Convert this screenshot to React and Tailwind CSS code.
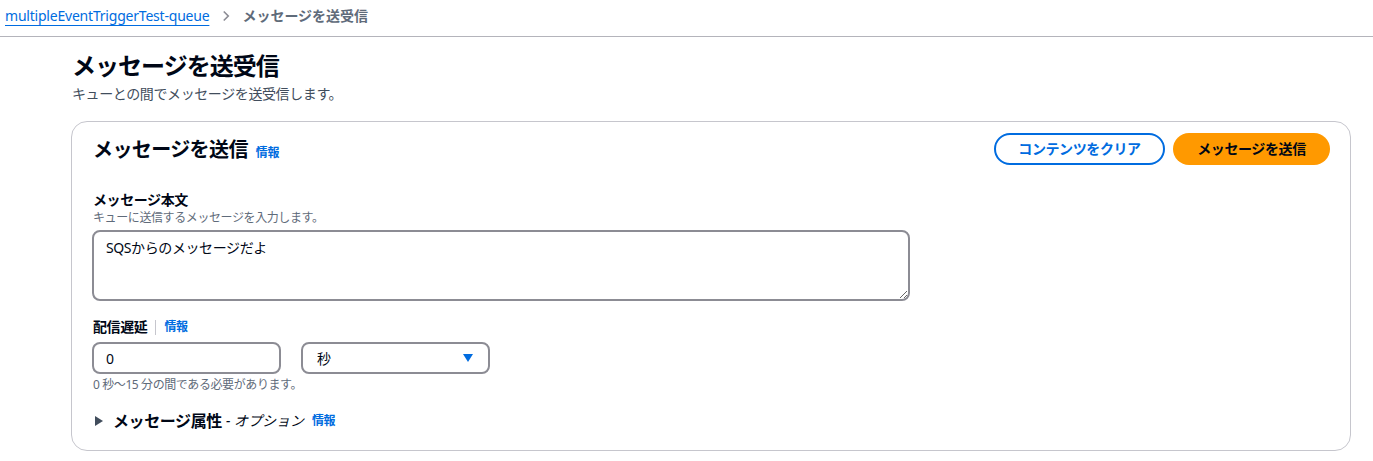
import React, { useState } from 'react';

const font = { fontFamily: '"Noto Sans", "Noto Sans CJK JP", sans-serif' };

const InfoLink = ({ className = '' }) => (
    <a href="#" className={`text-[12px] font-bold text-[#006ce0] leading-none ${className}`}>情報</a>
);

const App = () => {
    const [body, setBody] = useState('SQSからのメッセージだよ');
    const [delay, setDelay] = useState('0');

    return (
        <div className="min-h-screen bg-white text-[#000716] tracking-[-0.025em]" style={font}>
            <div className="h-[37px] border-b border-[#b4b4bb] flex items-start pl-[5px] pt-[6px]">
                <a href="#" className="text-[14px] text-[#006ce0] underline underline-offset-[4px] decoration-[1px] leading-[20px] tracking-[-0.015em]">multipleEventTriggerTest-queue</a>
                <svg className="ml-[11px] mr-[10px] mt-[4px]" width="12" height="12" viewBox="0 0 16 16" fill="none" stroke="#8c8c94" strokeWidth="2.2">
                    <path d="M5 2l6 6-6 6" />
                </svg>
                <span className="text-[14px] font-bold text-[#5f6b7a] leading-[20px] tracking-normal">メッセージを送受信</span>
            </div>

            <div className="pl-[71px] pr-[22px] pt-[12px]">
                <h1 className="text-[24px] font-bold leading-[34px] pl-[1px] tracking-[-0.04em]">メッセージを送受信</h1>
                <p className="text-[14px] text-[#414d5c] leading-[20px] mt-[1px] pl-[1px]">キューとの間でメッセージを送受信します。</p>

                <div className="mt-[17px] border border-[#c6c6cd] rounded-[16px] px-[21px] pt-[11px] pb-[18px]">
                    <div className="flex items-start justify-between">
                        <div className="flex items-baseline gap-[8px] pt-[3px]">
                            <h2 className="text-[20px] font-bold leading-[28px] tracking-[-0.03em]">メッセージを送信</h2>
                            <InfoLink />
                        </div>
                        <div className="flex gap-[8px] mr-[-1px]">
                            <button className="h-[32px] px-[20px] rounded-full border-2 border-[#006ce0] text-[#006ce0] text-[14px] font-bold leading-none w-[171px]">コンテンツをクリア</button>
                            <button className="h-[32px] px-[20px] rounded-full bg-[#ff9900] text-[#000716] text-[14px] font-bold leading-none w-[157px]">メッセージを送信</button>
                        </div>
                    </div>

                    <div className="mt-[25px]">
                        <label className="block text-[14px] font-bold leading-[20px]">メッセージ本文</label>
                        <p className="text-[12px] text-[#5f6b7a] leading-[16px]">キューに送信するメッセージを入力します。</p>
                        <textarea
                            value={body}
                            onChange={e => setBody(e.target.value)}
                            className="mt-[4px] ml-[-1px] block w-[818px] h-[71px] border-2 border-[#8c8c94] rounded-[8px] px-[12px] py-[6px] text-[14px] leading-[20px] outline-none"
                        />
                    </div>

                    <div className="mt-[16px]">
                        <div className="flex items-center">
                            <label className="text-[14px] font-bold leading-[20px]">配信遅延</label>
                            <span className="mx-[8px] h-[15px] border-l border-[#c6c6cd]" />
                            <InfoLink />
                        </div>
                        <div className="flex gap-[20px] mt-[5px] ml-[-1px]">
                            <input
                                value={delay}
                                onChange={e => setDelay(e.target.value)}
                                className="w-[189px] h-[32px] border-2 border-[#8c8c94] rounded-[8px] px-[12px] text-[14px] outline-none"
                            />
                            <div className="w-[189px] h-[32px] border-2 border-[#8c8c94] rounded-[8px] pl-[14px] pr-[14px] flex items-center justify-between text-[14px]">
                                <span>秒</span>
                                <svg width="12" height="10" viewBox="0 0 12 10"><path d="M1 1h10L6 9z" fill="#006ce0" /></svg>
                            </div>
                        </div>
                        <p className="text-[12px] text-[#5f6b7a] leading-[16px] mt-[3px]">0 秒〜15 分の間である必要があります。</p>
                    </div>

                    <div className="mt-[17px] flex items-center">
                        <svg className="ml-[1px] mr-[9px]" width="10" height="12" viewBox="0 0 10 12"><path d="M1 1l8 5-8 5z" fill="#414d5c" /></svg>
                        <span className="text-[16px] font-bold leading-[22px]">メッセージ属性</span>
                        <span className="text-[14px] italic leading-[20px] ml-[4px] tracking-normal">- オプション</span>
                        <InfoLink className="ml-[8px]" />
                    </div>
                </div>
            </div>
        </div>
    );
};

export default App;
